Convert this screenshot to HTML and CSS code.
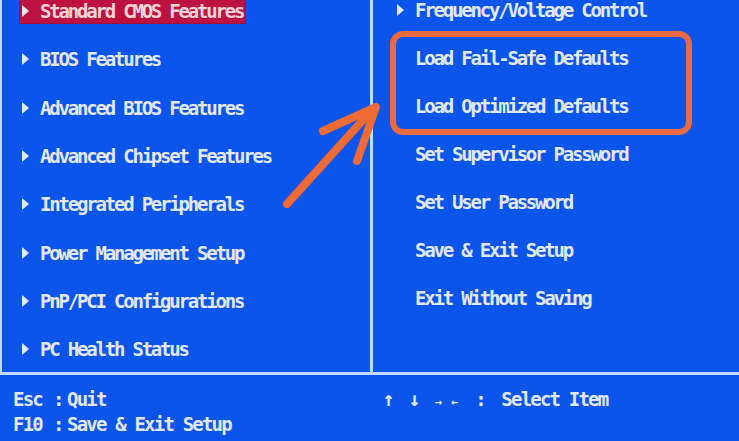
FILE: index.html
```html
<!DOCTYPE html>
<html lang="en">
<head>
    <meta charset="UTF-8">
    <meta name="viewport" content="width=device-width, initial-scale=1.0">
    <title>CMOS Setup Utility</title>
    <link rel="stylesheet" href="styles.css">
</head>
<body>
    <div class="screen">
        <div class="menu">
            <ul class="column left">
                <li class="item selected"><span class="entry"><i class="tri"></i>Standard CMOS Features</span></li>
                <li class="item"><span class="entry"><i class="tri"></i>BIOS Features</span></li>
                <li class="item"><span class="entry"><i class="tri"></i>Advanced BIOS Features</span></li>
                <li class="item"><span class="entry"><i class="tri"></i>Advanced Chipset Features</span></li>
                <li class="item"><span class="entry"><i class="tri"></i>Integrated Peripherals</span></li>
                <li class="item"><span class="entry"><i class="tri"></i>Power Management Setup</span></li>
                <li class="item"><span class="entry"><i class="tri"></i>PnP/PCI Configurations</span></li>
                <li class="item"><span class="entry"><i class="tri"></i>PC Health Status</span></li>
            </ul>
            <ul class="column right">
                <li class="item"><span class="entry"><i class="tri"></i>Frequency/Voltage Control</span></li>
                <li class="item"><span class="entry"><i class="gap"></i>Load Fail-Safe Defaults</span></li>
                <li class="item"><span class="entry"><i class="gap"></i>Load Optimized Defaults</span></li>
                <li class="item"><span class="entry"><i class="gap"></i>Set Supervisor Password</span></li>
                <li class="item"><span class="entry"><i class="gap"></i>Set User Password</span></li>
                <li class="item"><span class="entry"><i class="gap"></i>Save &amp; Exit Setup</span></li>
                <li class="item"><span class="entry"><i class="gap"></i>Exit Without Saving</span></li>
            </ul>
        </div>
        <div class="status">
            <div class="keys">
                <div class="key"><span class="k">Esc</span><span class="c">:</span><span>Quit</span></div>
                <div class="key"><span class="k">F10</span><span class="c">:</span><span>Save &amp; Exit Setup</span></div>
            </div>
            <div class="keys nav">
                <div class="key"><span class="arrows">&#8593; &#8595; <small>&#8594; &#8592;</small></span><span class="c">:</span><span>Select Item</span></div>
            </div>
        </div>

        <!-- annotation drawn over the screen -->
        <div class="callout"></div>
        <svg class="pointer" width="739" height="441" viewBox="0 0 739 441">
            <g fill="none" stroke="#ef6a35" stroke-width="8" stroke-linecap="round" stroke-linejoin="round">
                <path d="M287 204 L372 110"/>
                <path d="M323 131 L376 107 L357 161"/>
            </g>
        </svg>
    </div>
</body>
</html>
```

FILE: styles.css
```css
body {
    margin: 0;
    background: #0c55ea;
    font-family: "DejaVu Sans Mono", "Liberation Mono", monospace;
    font-weight: bold;
    color: #e2e8f3;
}
.screen {
    position: relative;
    width: 739px;
    height: 441px;
    overflow: hidden;
    background: #0c55ea;
}
.menu {
    display: flex;
    height: 372px;
    border-left: 2px solid #bcd9ff;
    border-bottom: 3px solid #bcd9ff;
}
.column {
    list-style: none;
    margin: 0;
    padding: 0;
}
.column.left {
    width: 371px;
    margin-top: -13px;
    border-right: 3px solid #bcd9ff;
    padding-left: 18px;
    box-sizing: border-box;
}
.column.right {
    flex: 1;
    margin-top: -14px;
    padding-left: 22px;
}
.left .item {
    height: 48.3px;
}
.right .item {
    height: 48px;
}
.item {
    display: flex;
    align-items: center;
    font-size: 19px;
    letter-spacing: -2.2px;
    white-space: nowrap;
}
.entry {
    display: inline-flex;
    align-items: center;
    padding: 1px 2px 1px 2px;
}
.selected .entry {
    background: #bd1240;
    color: #f6d4d6;
    box-shadow: 0 0 0 1px #9e1038;
}
.tri {
    display: inline-block;
    width: 0;
    height: 0;
    border-top: 6px solid transparent;
    border-bottom: 6px solid transparent;
    border-left: 7px solid #e2e8f3;
    margin-right: 11px;
}
.gap {
    display: inline-block;
    width: 18px;
}
.status {
    display: flex;
    padding: 11px 0 0 13px;
    font-size: 19px;
    letter-spacing: -1.8px;
}
.keys {
    width: 374px;
}
.key {
    display: flex;
    height: 25px;
    align-items: center;
}
.k {
    width: 40px;
}
.c {
    width: 14px;
}
.nav {
    padding-left: 13px;
}
.nav .arrows {
    font-size: 20px;
    letter-spacing: 1px;
    white-space: nowrap;
    margin-right: 16px;
}
.nav small {
    font-size: 12px;
    letter-spacing: 1px;
}
.nav .c {
    width: 26px;
}
.callout {
    position: absolute;
    left: 390px;
    top: 31px;
    width: 290px;
    height: 92px;
    border: 6px solid #e96a43;
    border-radius: 13px;
}
.pointer {
    position: absolute;
    left: 0;
    top: 0;
}
```
